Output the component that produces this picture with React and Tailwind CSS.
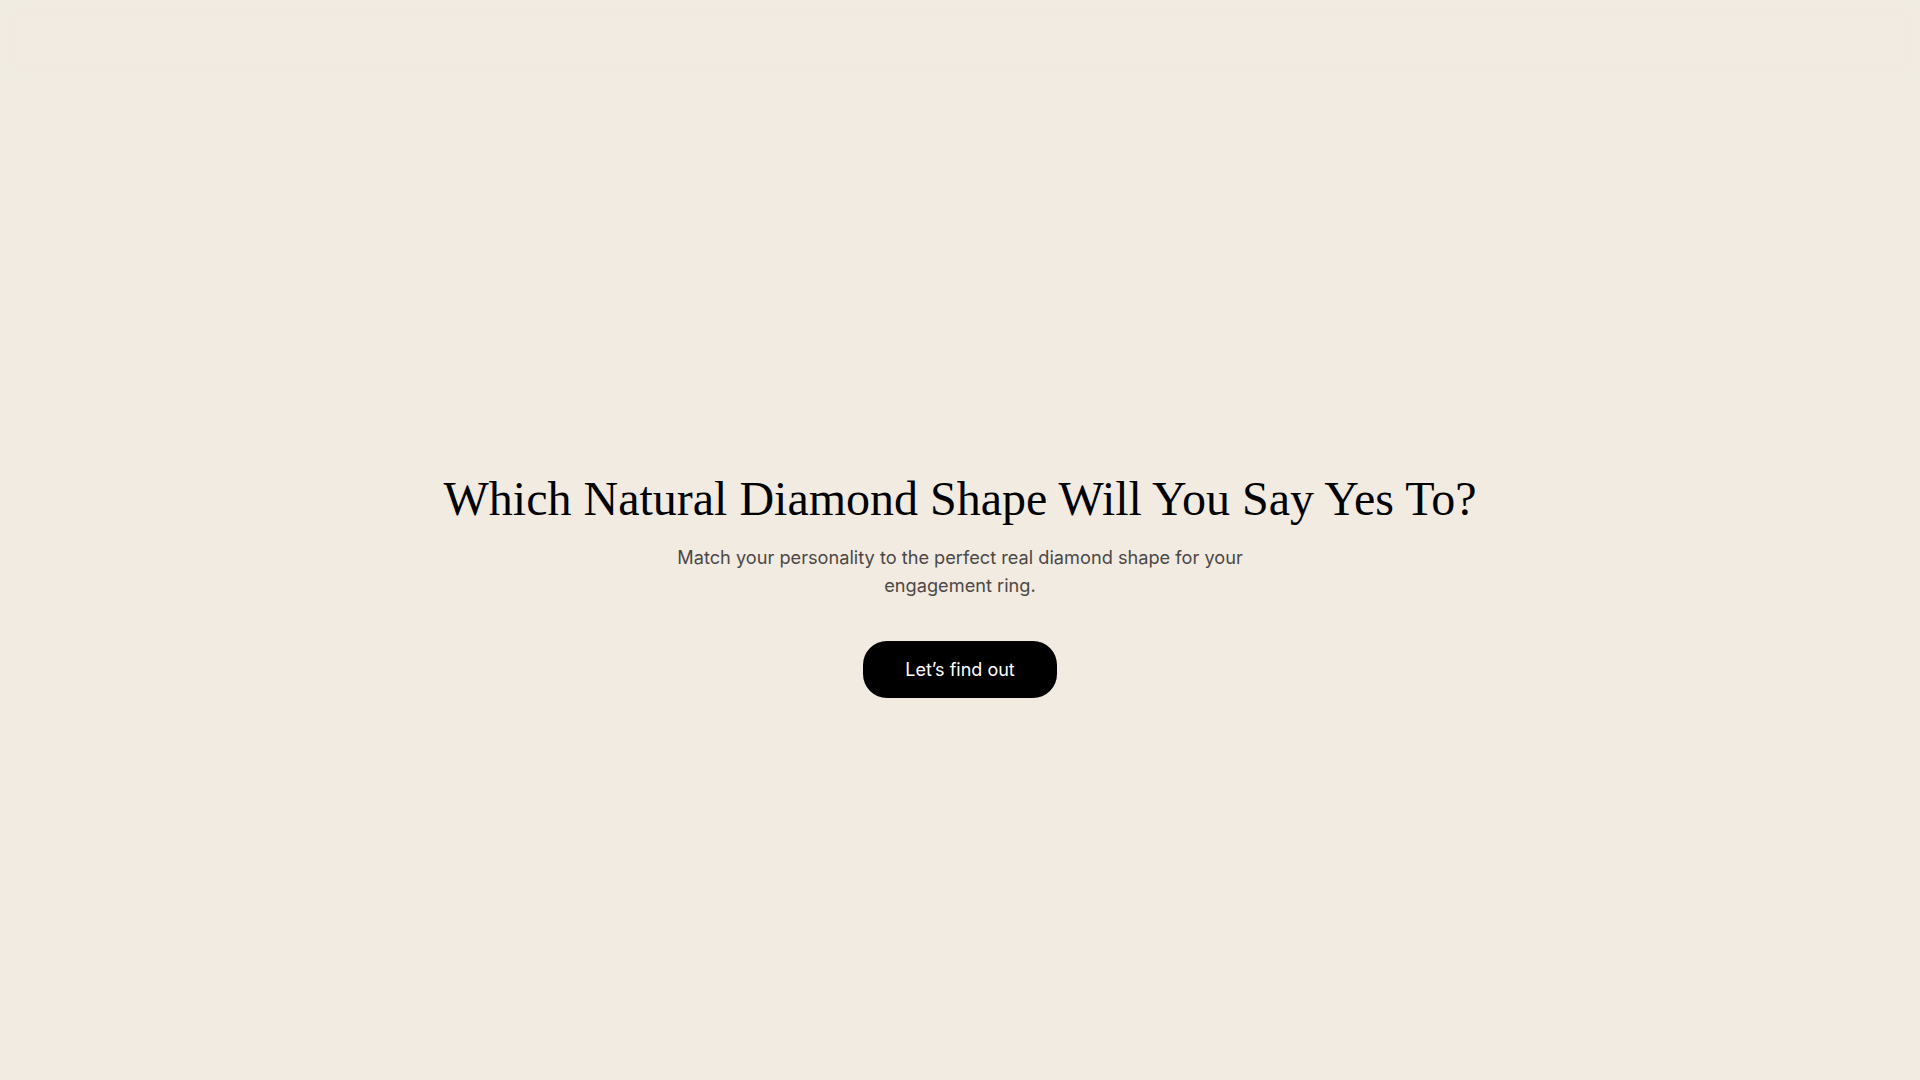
import React from "react";

export default function App() {
  return (
    <div className="min-h-screen flex flex-col bg-[#f2ebe2] font-['Inter','Noto_Sans',sans-serif]">
      {/* HEADER */}
      <header className="h-20 shrink-0 p-1">
        <div className="h-full w-full shadow-[inset_0_0_10px_4px_rgba(238,236,224,0.9)]" />
      </header>

      {/* HERO */}
      <main className="flex-1 flex flex-col items-center justify-center text-center pt-[8px]">
        <h1 className="font-['Liberation_Serif','Times_New_Roman',serif] text-[48px] leading-[1.2] text-black">
          Which Natural Diamond Shape Will You Say Yes To?
        </h1>
        <p className="mt-4 max-w-xl text-[18.2px] leading-[28px] text-[#4b4845]">
          Match your personality to the perfect real diamond shape for your
          engagement ring.
        </p>
        <button className="mt-[42px] h-[57px] px-[42px] rounded-3xl bg-black text-white text-[18px] leading-6 font-normal">
          Let’s find out
        </button>
      </main>
    </div>
  );
}
